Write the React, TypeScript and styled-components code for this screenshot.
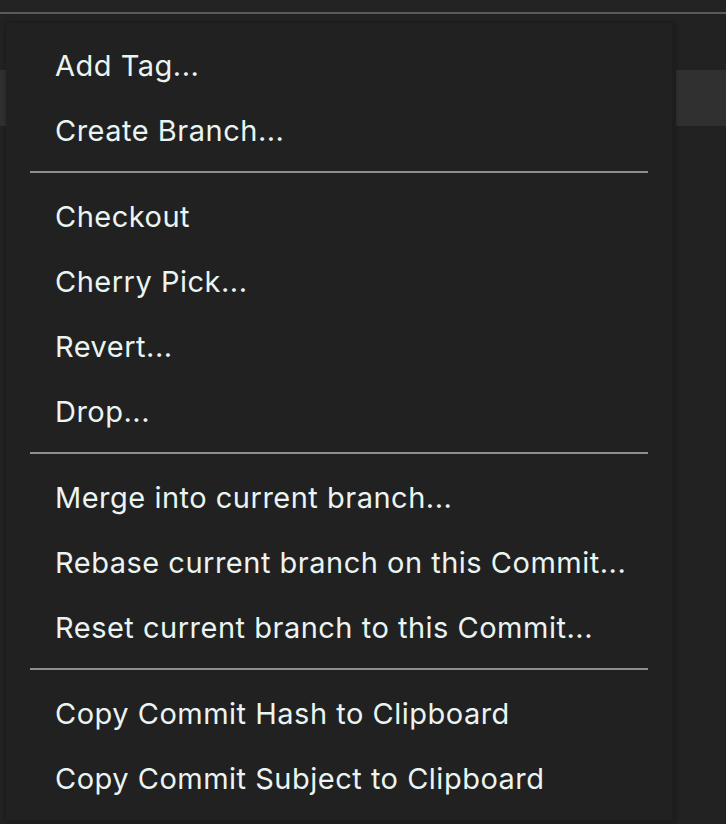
import React from "react";
import styled, { createGlobalStyle } from "styled-components";

const Global = createGlobalStyle`
  html, body {
    margin: 0;
    padding: 0;
    background: #232323;
  }
  #root {
    min-height: 824px;
  }
`;

const Page = styled.div`
  position: relative;
  width: 726px;
  height: 824px;
  overflow: hidden;
  background: #222222;
  font-family: Inter, "Noto Sans", sans-serif;
`;

const TopBar = styled.div`
  height: 12px;
  background: #232323;
  border-bottom: 2px solid #5a5a5a;
`;

const Content = styled.div`
  padding-top: 56px;
`;

const BackRow = styled.div<{ $active?: boolean }>`
  height: 56px;
  background: ${(p) => (p.$active ? "#303030" : "transparent")};
`;

const Menu = styled.div`
  position: absolute;
  left: 6px;
  top: 23px;
  width: 670px;
  height: 799px;
  box-sizing: border-box;
  background: #212121;
  border-right: 4px solid #1d1d1d;
  border-bottom: 2px solid #1d1d1d;
  box-shadow: 0 0 4px rgba(0, 0, 0, 0.3);
  padding: 10px 0 0;
  display: flex;
  flex-direction: column;
`;

const Item = styled.div`
  height: 65px;
  line-height: 65px;
  padding-left: 49px;
  font-size: 29px;
  color: #eaf4f2;
  white-space: nowrap;
  letter-spacing: 0.5px;
`;

const Separator = styled.div`
  height: 2px;
  margin: 8px 24px 11px 24px;
  background: #8c9190;
`;

const groups = [
  ["Add Tag...", "Create Branch..."],
  ["Checkout", "Cherry Pick...", "Revert...", "Drop..."],
  [
    "Merge into current branch...",
    "Rebase current branch on this Commit...",
    "Reset current branch to this Commit...",
  ],
  ["Copy Commit Hash to Clipboard", "Copy Commit Subject to Clipboard"],
];

export default function App() {
  return (
    <Page>
      <Global />
      <TopBar />
      <Content>
        <BackRow $active />
      </Content>
      <Menu>
        {groups.map((g, gi) => (
          <React.Fragment key={gi}>
            {gi > 0 && <Separator />}
            {g.map((label) => (
              <Item key={label}>{label}</Item>
            ))}
          </React.Fragment>
        ))}
      </Menu>
    </Page>
  );
}
